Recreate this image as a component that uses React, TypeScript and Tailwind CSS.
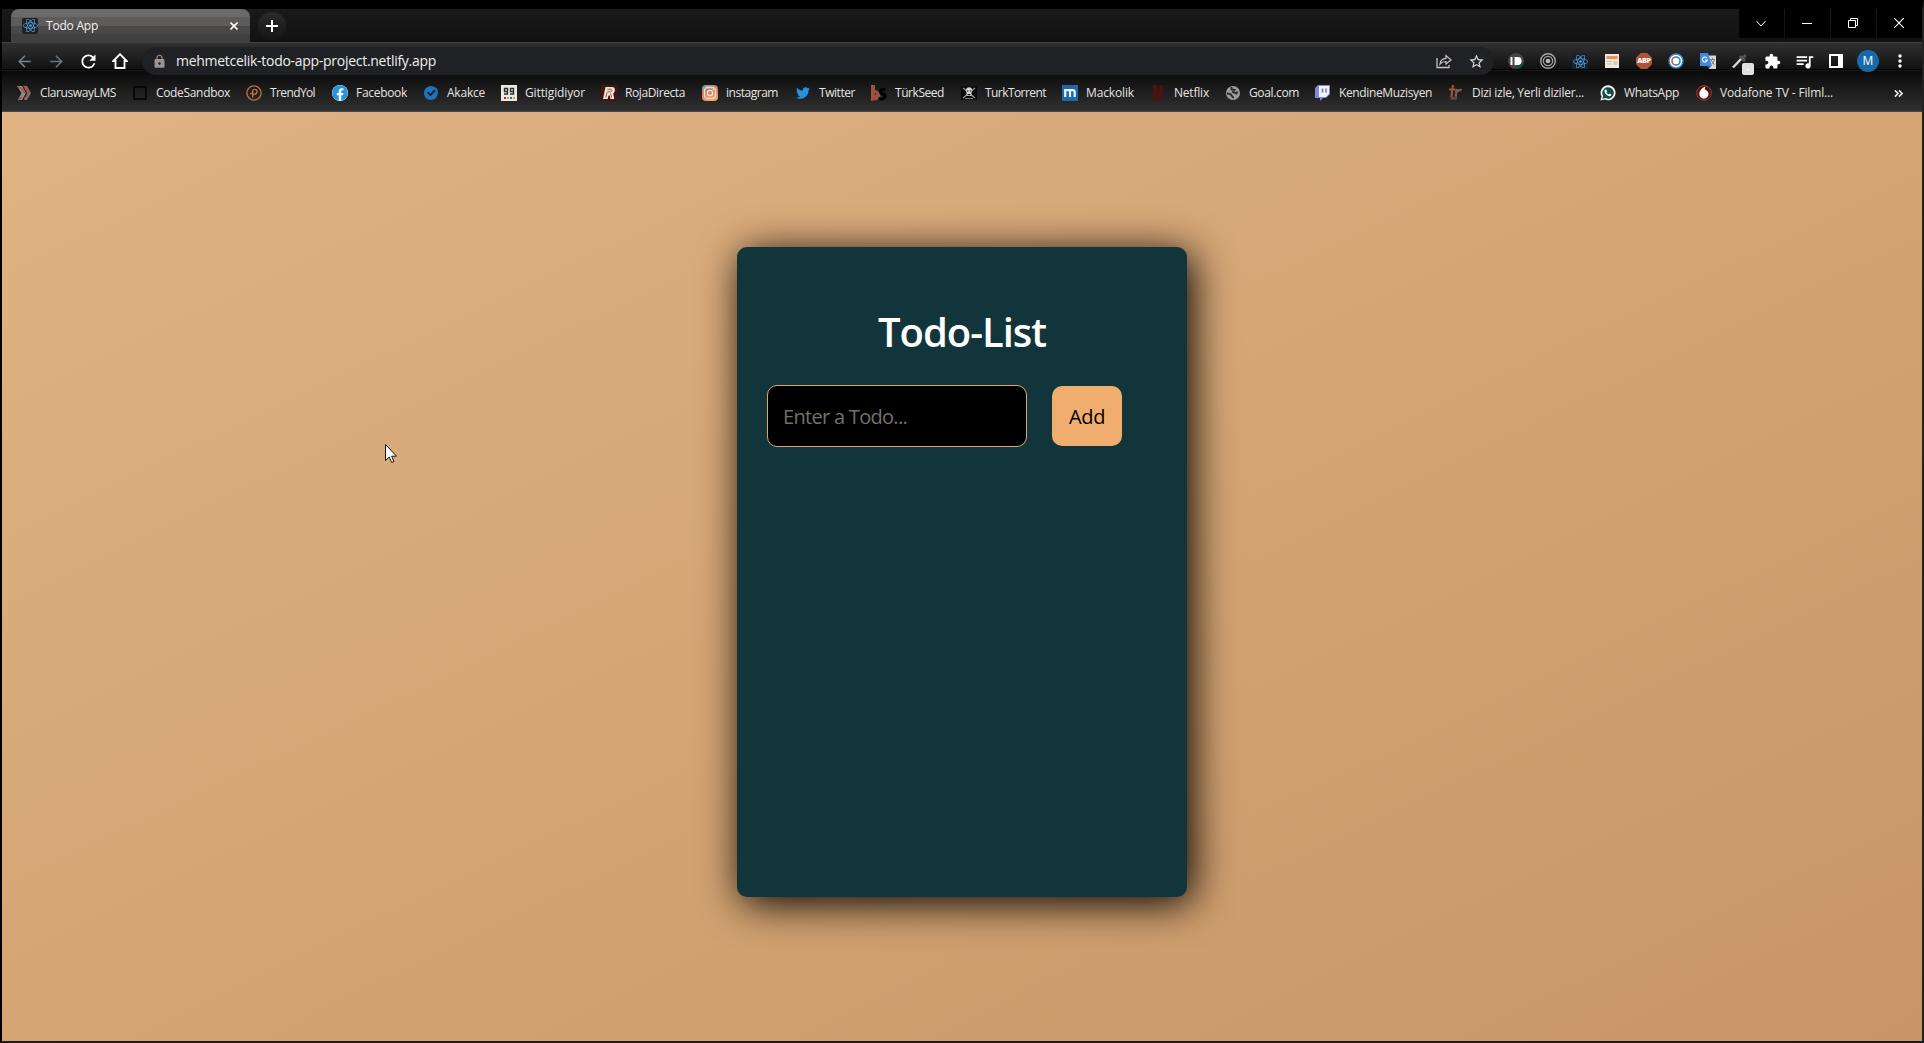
import { useLayoutEffect, useRef, useState } from "react";
import type { ReactNode } from "react";
import { FaReact, FaTwitter, FaFacebook } from "react-icons/fa";
import {
  MdArrowBack,
  MdArrowForward,
  MdExtension,
  MdLock,
  MdQueueMusic,
  MdRefresh,
  MdStarBorder,
} from "react-icons/md";

/* Text whose letter spacing is adjusted so that it fills a given width. */
function FitText({ text, width, className = "" }: { text: string; width: number; className?: string }) {
  const ref = useRef<HTMLSpanElement>(null);
  const [spacing, setSpacing] = useState(0);
  useLayoutEffect(() => {
    const natural = ref.current?.getBoundingClientRect().width ?? width;
    setSpacing((width - natural) / text.length);
  }, [text, width]);
  return (
    <span ref={ref} className={`inline-block whitespace-pre ${className}`} style={{ letterSpacing: `${spacing}px` }}>
      {text}
    </span>
  );
}

function Svg({ children, box = 16, className = "size-4" }: { children: ReactNode; box?: number; className?: string }) {
  return (
    <svg viewBox={`0 0 ${box} ${box}`} className={`shrink-0 ${className}`} fill="none">
      {children}
    </svg>
  );
}

const icons: Record<string, ReactNode> = {
  clarusway: (
    <Svg>
      <path d="M1 1h5l4 7-4 7H2l3.5-7z" fill="#8b8b90" />
      <path d="M7 1h4l4 7-4 7H8l3.5-7z" fill="#77777c" />
      <path d="M1 1l5 3 3 4M2 15l4-3M8 1l3 3 3 4M8 14l4-4" stroke="#b5492f" strokeWidth="1.3" />
    </Svg>
  ),
  sandbox: (
    <Svg>
      <rect x="2" y="2" width="12" height="12" stroke="#000" strokeWidth="1.4" />
    </Svg>
  ),
  trendyol: (
    <Svg>
      <circle cx="8" cy="8" r="7.1" stroke="#b96f3e" strokeWidth="1.4" />
      <path d="M6.700 12.500V6c0-2.200 4.300-2.300 4.300.5 0 2.200-2 3-4 3M4 8.500h3" stroke="#b96f3e" strokeWidth="1.4" />
    </Svg>
  ),
  facebook: (
    <span className="grid size-4 place-items-center rounded-full bg-white">
      <FaFacebook className="size-4 text-[#2196e3]" />
    </span>
  ),
  akakce: (
    <Svg>
      <path d="M8 1c2 0 3 .9 4.500 1.500 2 .8 2.500 3 2.300 5C14.700 12 12 15 8 15S1 12 1 8s3-7 7-7z" fill="#1b74bd" />
      <path d="M4.500 7.200l3 2.700L12 5.200" stroke="#222" strokeWidth="2" />
    </Svg>
  ),
  gitti: (
    <Svg>
      <path d="M0 0h16v16H0z" fill="#ebe9e6" />
      <path d="M3.500 3.500h3v3h-3zM6.500 3v6h-3.500M9.500 3.500h3v3h-3zM12.500 3v6H9" stroke="#2e2e2e" strokeWidth="1.400" />
      <path d="M3 12h2v2H3z" fill="#b32b20" />
      <path d="M6 12h2v2H6z" fill="#e08a3c" />
      <path d="M9 12h2v2H9z" fill="#2569b5" />
      <path d="M12 12h2v2h-2z" fill="#e0a040" />
    </Svg>
  ),
  roja: (
    <Svg>
      <path d="M0 0h16v16H0z" fill="#47140d" />
      <path d="M4.500 2H11c4 0 3.400 5 1.200 6.500L13.300 14H9.500L8.700 10.500H7.500L6.700 14H2z" fill="#ece3df" />
      <path d="M6.300 4.300H10c1.500.2 1.200 2.200-.4 2.500H6.300M6 7.500L4.800 12.500M9.500 8.500l1.200 4" stroke="#a8523b" strokeWidth="1" />
    </Svg>
  ),
  instagram: (
    <Svg>
      <defs>
        <linearGradient id="insta" x1="0" y1="0" x2=".4" y2="1">
          <stop stopColor="#7fa0bd" />
          <stop offset=".5" stopColor="#cf7d61" />
          <stop offset="1" stopColor="#eda867" />
        </linearGradient>
      </defs>
      <rect width="16" height="16" rx="4" fill="url(#insta)" />
      <rect x="2.500" y="2.500" width="11" height="11" rx="3" stroke="#f0d9c9" strokeWidth="1.300" />
      <circle cx="8" cy="8" r="2.700" stroke="#f5e2d4" strokeWidth="1.300" />
      <circle cx="11.500" cy="4.500" r=".8" fill="#f5e2d4" />
    </Svg>
  ),
  twitter: <FaTwitter className="size-[14px] text-[#2593dc]" />,
  turkseed: (
    <Svg>
      <path d="M0 0h4v5l3 1 2 3 1 5-4 1-6 1z" fill="#9c523d" />
      <path d="M14.500 4.500c-4.500-1-7 2-3.500 4 3 1.300 4 3 2 4.700-2 1-4 .8-5.500-.2" stroke="#000" strokeWidth="3" />
      <circle cx="4.500" cy="9" r=".8" fill="#222" />
    </Svg>
  ),
  pirate: (
    <Svg>
      <path d="M0 1.500h16v13H0z" fill="#080808" />
      <path d="M2 3l12 10M14 3L2 13" stroke="#8c8c88" strokeWidth="1.500" />
      <path d="M4.800 5.500c0-4.500 6.500-4.500 6.500 0L10.500 8v3h-5V8z" fill="#d6d6d2" />
      <path d="M5.800 6h1.600M8.800 6h1.600M6.500 9.700h3" stroke="#111" strokeWidth="1.200" />
      <path d="M4 13.500h8" stroke="#777" />
    </Svg>
  ),
  mackolik: (
    <Svg>
      <path d="M0 0h16v16H0z" fill="#1d68ad" />
      <path d="M3.200 12V5.200h7.500c1.500 0 2 .8 2 2V12M8 5.500V12" stroke="#eaf2f8" strokeWidth="2.200" />
    </Svg>
  ),
  netflix: (
    <Svg>
      <path d="M3 0h3.500l3 8V0H13v16H9.700L6.500 8v8H3z" fill="#4c120d" />
    </Svg>
  ),
  globe: (
    <Svg>
      <circle cx="8" cy="8" r="7" fill="#a09b99" />
      <path d="M2 8.500c2 0 4 .3 4.500 2 .3 1 2 .8 1.500 2.800M6.500 2v2.500l3 .5-1.500 2 3.500 1.500 1-2" stroke="#2a2a2a" strokeWidth="1.900" />
    </Svg>
  ),
  twitch: (
    <Svg>
      <path d="M3 0h12v9l-4 4H8l-3 3v-3H0V3z" fill="#8088dc" />
      <path d="M4 1h10v8l-3 3H4z" fill="#f4f2fa" />
      <path d="M7.500 3.500v4M11 3.500v4" stroke="#6f78cf" strokeWidth="1.600" />
    </Svg>
  ),
  dizi: (
    <Svg>
      <path d="M5 0L3.500 11c-.3 2.500 1.500 2.500 2.500 2M1 4.500h6.500" stroke="#9c523d" strokeWidth="2.200" />
      <path d="M8.500 4L7.500 14M9 7c1-2 3-2.600 4.500-1.500" stroke="#765f57" strokeWidth="2.200" />
      <path d="M4 12l-.5 3M7.700 11v4" stroke="#4d4d4d" strokeWidth="2" />
    </Svg>
  ),
  whatsapp: (
    <Svg>
      <path d="M.4 15.600l1.200-4A7.500 7.500 0 1 1 4.700 14.500z" fill="#f3f4f3" />
      <path d="M2.300 13.700l.8-2.700a5.800 5.800 0 1 1 2.200 2.100z" fill="#0f4f49" />
      <path d="M5.300 4.500l1.200.2.600 1.700-.7.800c.5 1 1.200 1.700 2.300 2.200l.9-.8 1.700.9c0 1.500-1.500 2-2.700 1.500C6.500 10.300 5.100 8.700 4.600 7c-.2-1 0-1.900.7-2.500z" fill="#fff" />
    </Svg>
  ),
  vodafone: (
    <Svg>
      <circle cx="8" cy="8" r="7.400" fill="#54140e" stroke="#8a4034" strokeWidth="1" />
      <path d="M9.700 1.500c-1 1-1 2.100-.8 3.100 2 .8 3.600 2.300 3.600 4.500a4.600 4.600 0 0 1-9.200 0C3.300 5.700 6 2.600 9.700 1.500z" fill="#fff" />
    </Svg>
  ),
};

type Bookmark = { icon: string; label: string; text: number; box: string };

const bookmarks: Bookmark[] = [
  { icon: "clarusway", label: "ClaruswayLMS", text: 76, box: "w-[116px]" },
  { icon: "sandbox", label: "CodeSandbox", text: 74, box: "w-[114px]" },
  { icon: "trendyol", label: "TrendYol", text: 45, box: "w-[86px]" },
  { icon: "facebook", label: "Facebook", text: 51, box: "w-[91px]" },
  { icon: "akakce", label: "Akakce", text: 38, box: "w-[78px]" },
  { icon: "gitti", label: "Gittigidiyor", text: 60, box: "w-[100px]" },
  { icon: "roja", label: "RojaDirecta", text: 60, box: "w-[101px]" },
  { icon: "instagram", label: "instagram", text: 52, box: "w-[93px]" },
  { icon: "twitter", label: "Twitter", text: 36, box: "w-[76px]" },
  { icon: "turkseed", label: "TürkSeed", text: 49, box: "w-[90px]" },
  { icon: "pirate", label: "TurkTorrent", text: 61, box: "w-[101px]" },
  { icon: "mackolik", label: "Mackolik", text: 48, box: "w-[88px]" },
  { icon: "netflix", label: "Netflix", text: 35, box: "w-[75px]" },
  { icon: "globe", label: "Goal.com", text: 50, box: "w-[90px]" },
  { icon: "twitch", label: "KendineMuzisyen", text: 93, box: "w-[133px]" },
  { icon: "dizi", label: "Dizi izle, Yerli diziler...", text: 112, box: "w-[152px]" },
  { icon: "whatsapp", label: "WhatsApp", text: 55, box: "w-[96px]" },
  { icon: "vodafone", label: "Vodafone TV - Filml...", text: 113, box: "w-[150px]" },
];

function ToolSlot({ children }: { children: ReactNode }) {
  return <span className="grid w-8 shrink-0 place-items-center">{children}</span>;
}

function TabStrip() {
  return (
    <div className="flex h-[33px] bg-linear-to-b from-[#1a1a1a] to-[#111]">
      <div className="ml-[9px] flex h-[33px] w-[239px] items-center rounded-t-[8px] bg-[linear-gradient(#6b6a69_0_8px,#5d5c5b_8px_17px,#484848_17px_25px,#404040_25px)] pl-[11px]">
        <span className="grid size-4 place-items-center rounded-[2px] bg-[#1e2125]">
          <FaReact className="size-[15px] text-[#58a6e2]" />
        </span>
        <FitText text="Todo App" width={52} className="ml-2 text-[12px] text-[#f3f1ef]" />
        <Svg box={8} className="ml-auto mr-3 size-2">
          <path d="M.5.5l7 7m0-7l-7 7" stroke="#fff" strokeWidth="1.600" />
        </Svg>
      </div>
      <span className="mt-[3px] ml-2 grid size-7 place-items-center rounded-full bg-linear-to-b from-[#2b2b2b] to-[#151515]">
        <Svg box={12} className="size-3">
          <path d="M6 0v12M0 6h12" stroke="#fff" strokeWidth="2" />
        </Svg>
      </span>
      <div className="ml-auto grid h-[29px] w-[183px] grid-cols-4 gap-px text-white">
        <span className="grid place-items-center bg-black pr-[2px]">
          <Svg box={12} className="size-3">
            <path d="M1.500 3L6 8l4.500-5" stroke="#fff" />
          </Svg>
        </span>
        <span className="grid place-items-center bg-black pr-[2px]">
          <span className="h-px w-[10px] bg-white" />
        </span>
        <span className="grid place-items-center bg-black pr-[2px] pb-[1px]">
          <Svg box={10} className="size-[10px]">
            <path d="M.5 2.500h7v7h-7zM2.500 2.500v-2h7v7h-2" stroke="#fff" />
          </Svg>
        </span>
        <span className="grid place-items-center bg-black pr-[2px] pb-[1px]">
          <Svg box={10} className="size-[10px]">
            <path d="M0 0l10 10M10 0L0 10" stroke="#fff" strokeWidth="1.200" />
          </Svg>
        </span>
      </div>
    </div>
  );
}

function Toolbar() {
  return (
    <div className="flex h-[33px] items-center border-t border-[#424242] bg-[linear-gradient(#303030,#111_26px,#000_26px_27px,#161616_27px_28px,#0c0c0c_28px)] pt-[4px] pl-[6px]">
      <ToolSlot>
        <MdArrowBack className="size-[19px] text-[#75828b]" />
      </ToolSlot>
      <ToolSlot>
        <MdArrowForward className="size-[19px] text-[#66757f]" />
      </ToolSlot>
      <ToolSlot>
        <MdRefresh className="size-[21px] text-white" />
      </ToolSlot>
      <ToolSlot>
        <Svg box={16} className="size-4">
          <path d="M8 1.200L1.300 8H3.500v7h9V8h2.200z" stroke="#fff" strokeWidth="1.900" />
        </Svg>
      </ToolSlot>
      <div className="ml-[6px] flex h-7 w-[1352px] items-center rounded-full bg-[#202124] pl-[10px]">
        <MdLock className="size-[15px] text-[#9b9491]" />
        <FitText text="mehmetcelik-todo-app-project.netlify.app" width={260} className="mb-[1px] ml-[9px] text-[14px] text-[#efeeec]" />
        <span className="mr-[2px] ml-auto flex">
          <ToolSlot>
            <Svg box={16} className="size-4">
              <path d="M1 5v9.500h12V12" stroke="#c5c2bf" strokeWidth="1.300" />
              <path d="M4 11c.5-4 3-5.500 6-5.600V2.500L15 7l-5 4V8.500c-2.500 0-4.500.7-6 2.500z" stroke="#c5c2bf" strokeWidth="1.200" />
            </Svg>
          </ToolSlot>
          <ToolSlot>
            <MdStarBorder className="size-[17px] text-[#dddad7]" />
          </ToolSlot>
        </span>
      </div>
      <div className="ml-[6px] flex items-center">
        <ToolSlot>
          <Svg>
            <circle cx="8" cy="8" r="8" fill="#444" />
            <path d="M8 16a8 8 0 0 0 8-7L9 12z" fill="#164c43" />
            <path d="M3.500 4v8" stroke="#fff" strokeWidth="2" />
            <path d="M7.500 5v6h2.300c3.800 0 3.800-6 0-6z" fill="#fff" stroke="#fff" strokeWidth="2" />
          </Svg>
        </ToolSlot>
        <ToolSlot>
          <Svg>
            <circle cx="8" cy="8" r="7.300" stroke="#a7a3a1" strokeWidth="1.400" />
            <circle cx="8" cy="8" r="4.600" stroke="#a7a3a1" strokeWidth="1.300" />
            <circle cx="8" cy="8" r="2.300" fill="#bcb9b6" />
          </Svg>
        </ToolSlot>
        <ToolSlot>
          <span className="grid size-4 place-items-center bg-[#1c2025]">
            <FaReact className="size-[15px] text-[#4ba6f0]" />
          </span>
        </ToolSlot>
        <ToolSlot>
          <Svg>
            <path d="M1 1h14v14H1z" fill="#ece8e1" />
            <path d="M2.500 3h11v3h-11z" fill="#ef9157" />
            <path d="M3 8.500h5M3 11h5" stroke="#c6beb4" />
            <path d="M9.500 8h4v4h-4z" fill="#d9c5b1" />
          </Svg>
        </ToolSlot>
        <ToolSlot>
          <span className="grid size-4 place-items-center bg-[#b05238] text-center font-['Open_Sans',sans-serif] text-[7px] leading-4 font-extrabold tracking-[-0.3px] text-white [clip-path:polygon(30%_0,70%_0,100%_30%,100%_70%,70%_100%,30%_100%,0_70%,0_30%)]">
            ABP
          </span>
        </ToolSlot>
        <ToolSlot>
          <Svg>
            <circle cx="8" cy="8" r="7" fill="#fff" stroke="#3186ce" strokeWidth="1.500" />
            <path d="M8 4a4 4 0 0 1 0 8" stroke="#2784d4" strokeWidth="1.600" />
            <path d="M8 12a4 4 0 0 1 0-8" stroke="#c05f3e" strokeWidth="1.600" />
          </Svg>
        </ToolSlot>
        <ToolSlot>
          <Svg>
            <path d="M6 2.500h10V16H9z" fill="#d7d7d5" />
            <path d="M0 0h8l4 13H0z" fill="#3d8bde" />
            <path d="M7 13h4l-2 3z" fill="#215d9c" />
            <path d="M7 5.200a2.500 2.500 0 1 0 .3 1.800H5" stroke="#fff" strokeWidth="1.100" />
            <path d="M10 6.500h5M12.500 5v1.500M11 7l3.500 5M14.500 7L12 11" stroke="#7c8288" />
          </Svg>
        </ToolSlot>
        <ToolSlot>
          <span className="relative size-4">
            <Svg>
              <path d="M1 14.500L9.500 5.500" stroke="#d9d6d1" strokeWidth="2.500" />
              <path d="M8 3l5 5M10.500 5.500l3-3.500" stroke="#555" strokeWidth="3" />
            </Svg>
            <span className="absolute top-[10px] left-[10px] grid h-3 w-3 place-items-center rounded-[2px] bg-[#e2e1df]">
              <i className="h-px w-[2px] bg-white" />
            </span>
          </span>
        </ToolSlot>
        <ToolSlot>
          <MdExtension className="size-[17px] text-white" />
        </ToolSlot>
        <ToolSlot>
          <MdQueueMusic className="size-[21px] text-white" />
        </ToolSlot>
        <ToolSlot>
          <Svg className="size-[14px]" box={14}>
            <path d="M1 1h12v12H1z" stroke="#fff" strokeWidth="2" />
            <path d="M9 1h4v12H9z" fill="#fff" />
          </Svg>
        </ToolSlot>
        <ToolSlot>
          <span className="grid size-[22px] place-items-center rounded-full bg-[#1769aa] text-[12px] leading-none text-white">M</span>
        </ToolSlot>
        <ToolSlot>
          <Svg box={14} className="size-[14px]">
            <circle cx="7" cy="2" r="1.700" fill="#fff" />
            <circle cx="7" cy="7" r="1.700" fill="#fff" />
            <circle cx="7" cy="12" r="1.700" fill="#fff" />
          </Svg>
        </ToolSlot>
      </div>
    </div>
  );
}

function BookmarksBar() {
  return (
    <div className="flex h-[37px] items-center border-b border-[#4a4743] bg-linear-to-b from-[#0f0f0f] to-[#303030] pl-[14px]">
      {bookmarks.map((b) => (
        <div key={b.label} className={`flex shrink-0 items-center gap-2 ${b.box}`}>
          <span className="grid size-4 shrink-0 place-items-center">{icons[b.icon]}</span>
          <FitText text={b.label} width={b.text} className="text-[12px] leading-4 text-[#e6e4e1]" />
        </div>
      ))}
      <Svg box={10} className="ml-auto mr-[19px] size-[9px]">
        <path d="M1 1.500L4.500 5 1 8.500M5.500 1.500L9 5 5.500 8.500" stroke="#f0efed" strokeWidth="1.700" />
      </Svg>
    </div>
  );
}

function TodoCard() {
  return (
    <section className="h-[650px] w-[450px] rounded-[10px] bg-[#12343b] px-[30px] pt-[58px] shadow-[5px_6px_42px_#000]">
      <h1 className="text-center text-[40px] leading-[54px] font-semibold text-white">
        <FitText text="Todo-List" width={168} />
      </h1>
      <div className="mt-[26px] flex items-center gap-[25px]">
        <div className="flex h-[62px] w-[260px] items-center rounded-[10px] border border-[#e0a66d] bg-black pt-[2px] pl-[15px] text-[20px] text-[#757069]">
          <FitText text="Enter a Todo..." width={124} />
        </div>
        <button className="h-[60px] w-[70px] rounded-[10px] bg-[#f0ad6f] pt-[2px] text-[20px] text-black">
          <FitText text="Add" width={36} />
        </button>
      </div>
    </section>
  );
}

export default function App() {
  return (
    <div className="relative flex h-[1043px] w-[1924px] flex-col overflow-hidden border-x-2 border-t-[9px] border-b-2 border-t-black border-r-[#222] border-b-[#1c1c1e] border-l-black font-['Open_Sans','Noto_Sans',sans-serif]">
      <TabStrip />
      <Toolbar />
      <BookmarksBar />
      <main className="flex flex-1 justify-center bg-linear-to-br from-[#e1b382] to-[#c89666] pt-[135px]">
        <TodoCard />
      </main>
      <svg viewBox="0 0 12 19" className="absolute top-[435px] left-[383px] h-[19px] w-3">
        <path d="M.5.500v16l3.700-3.500 2.500 5.500 2.300-1-2.400-5.300h5z" fill="#fff" stroke="#111" />
      </svg>
    </div>
  );
}
